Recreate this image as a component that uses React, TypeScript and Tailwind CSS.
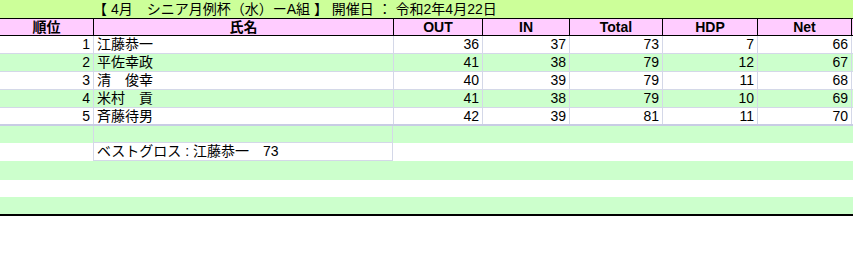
import React from 'react';

const rows = [
  { rank: 1, name: '江藤恭一', out: 36, inn: 37, total: 73, hdp: 7, net: 66 },
  { rank: 2, name: '平佐幸政', out: 41, inn: 38, total: 79, hdp: 12, net: 67 },
  { rank: 3, name: '清　俊幸', out: 40, inn: 39, total: 79, hdp: 11, net: 68 },
  { rank: 4, name: '米村　貢', out: 41, inn: 38, total: 79, hdp: 10, net: 69 },
  { rank: 5, name: '斉藤待男', out: 42, inn: 39, total: 81, hdp: 11, net: 70 },
];

const headers = ['順位', '氏名', 'OUT', 'IN', 'Total', 'HDP', 'Net'];
const widths = ['w-[93px]', 'w-[300px]', 'w-[89px]', 'w-[87px]', 'w-[93px]', 'w-[95px]', 'w-[95px]'];

export default function App() {
  return (
    <div
      className="w-[855px] h-[253px] bg-white text-[14px] text-black"
      style={{ fontFamily: '"Liberation Sans", "Noto Sans CJK JP", sans-serif' }}
    >
      <div className="w-[853px]">
        {/* title */}
        <div className="h-[18px] bg-[#ccff99] flex items-center pl-[93px] leading-[18px] whitespace-pre">
          【 4月　シニア月例杯（水）ーA組 】 開催日 ： 令和2年4月22日
        </div>

        {/* header */}
        <div className="flex h-[18px] bg-[#ffccff] border-y border-black">
          {headers.map((h, i) => (
            <div
              key={h}
              className={`${widths[i]} shrink-0 flex items-center justify-center font-bold leading-[16px] ${
                i > 0 ? 'border-l border-black' : ''
              } ${i === headers.length - 1 ? 'border-r border-black' : ''}`}
            >
              {h}
            </div>
          ))}
        </div>

        {/* data */}
        {rows.map((r, idx) => {
          const cells = [r.rank, r.name, r.out, r.inn, r.total, r.hdp, r.net];
          return (
            <div
              key={r.rank}
              className={`flex h-[18px] border-b ${idx === rows.length - 1 ? 'border-b-2 border-[#c8cce4]' : 'border-[#d4d8e8]'} ${
                idx % 2 === 1 ? 'bg-[#ccffcc]' : 'bg-white'
              }`}
            >
              {cells.map((c, i) => (
                <div
                  key={i}
                  className={`${widths[i]} shrink-0 flex items-center leading-[17px] ${
                    i === 1 ? 'justify-start pl-[3px]' : 'justify-end pr-[3px]'
                  } ${i > 0 ? 'border-l border-[#d4d8e8]' : ''} ${i === 6 ? 'border-r border-[#d4d8e8]' : ''}`}
                >
                  {c}
                </div>
              ))}
            </div>
          );
        })}

        {/* empty + best gross */}
        <div className="flex h-[17px] bg-[#ccffcc]">
          <div className="w-[93px] shrink-0" />
          <div className="w-[300px] shrink-0 border-x border-b border-[#d4d8e8]" />
        </div>
        <div className="flex h-[18px] bg-white">
          <div className="w-[93px] shrink-0" />
          <div className="w-[300px] shrink-0 border-x border-b border-[#d4d8e8] flex items-center pl-[3px] leading-[17px] whitespace-pre">
            ベストグロス : 江藤恭一　73
          </div>
        </div>
        <div className="h-[19px] bg-[#ccffcc]" />
        <div className="h-[17px] bg-white" />
        <div className="h-[19px] bg-[#ccffcc] border-b-2 border-black" />
      </div>
    </div>
  );
}
